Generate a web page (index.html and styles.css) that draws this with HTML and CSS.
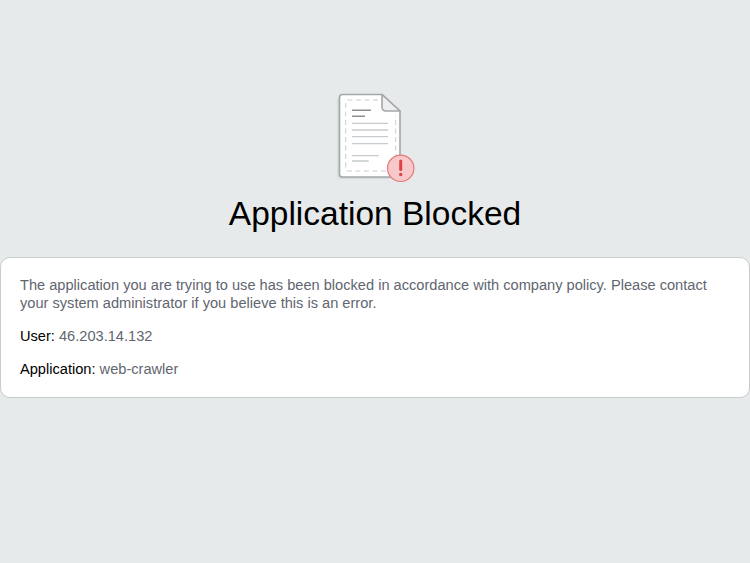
FILE: index.html
```html
<!DOCTYPE html>
<html lang="en">
<head>
<meta charset="utf-8">
<title>Application Blocked</title>
<link rel="stylesheet" href="styles.css">
</head>
<body>
<main class="page">
  <svg class="icon" width="80" height="94" viewBox="0 0 80 94" aria-hidden="true">
    <path d="M2 7 H46 L64 25 V88 H6 Q2 88 2 84 Z" fill="#d9dcde"/>
    <path d="M7.500 3.500 H47 L65 20 V83 Q65 86 62 86 H7.500 Q4.500 86 4.500 83 V6.500 Q4.500 3.500 7.500 3.500 Z" fill="#fff" stroke="#a4a7aa" stroke-width="1.600"/>
    <path d="M47 3.500 V16 Q47 20 51 20 H65 Z" fill="#eceeef" stroke="#a4a7aa" stroke-width="1.600" stroke-linejoin="round"/>
    <path d="M43 9 H13.700 Q10.700 9 10.700 12 V77 Q10.700 80 13.700 80 H58 Q60.700 80 60.700 77 V25" fill="none" stroke="#c9cccd" stroke-width="1" stroke-dasharray="5 3.500"/>
    <path d="M17 19.300 H36 M17 25.300 H30" stroke="#8d9093" stroke-width="1.500"/>
    <path d="M17 32.300 H53 M17 39 H53 M17 45.700 H53 M17 52.700 H53 M17 64.700 H44 M17 70 H33.700" stroke="#c8cbcd" stroke-width="1.300"/>
    <circle cx="65.700" cy="77.300" r="13.200" fill="#f8c9ca" stroke="#e7787b" stroke-width="1.200"/>
    <path d="M65.700 70 V78.500" stroke="#dd4248" stroke-width="3" stroke-linecap="round"/>
    <circle cx="65.700" cy="83.500" r="1.700" fill="#dd4248"/>
  </svg>
  <h1 class="title">Application Blocked</h1>
  <section class="card">
    <p class="message">The application you are trying to use has been blocked in accordance with company policy. Please contact your system administrator if you believe this is an error.</p>
    <p class="detail"><span class="label">User:</span> 46.203.14.132</p>
    <p class="detail"><span class="label">Application:</span> web-crawler</p>
  </section>
</main>
</body>
</html>
```

FILE: styles.css
```css
html, body {
  margin: 0;
  height: 100%;
}
body {
  background: #e7eaeb;
  font-family: "Liberation Sans", Arial, sans-serif;
  color: #5f6670;
}
.page {
  display: flex;
  flex-direction: column;
  align-items: center;
  padding-top: 91px;
}
.icon {
  display: block;
  filter: blur(0.3px);
}
.title {
  margin: 8px 0 22px;
  font-size: 33.500px;
  line-height: 42px;
  font-weight: 400;
  color: #000;
  text-align: center;
}
.card {
  box-sizing: border-box;
  width: 750px;
  height: 141px;
  padding: 18px 19px;
  background: #fff;
  border: 1px solid #c8ccce;
  border-radius: 10px;
  font-size: 14.620px;
  line-height: 18px;
}
.message {
  margin: 0 0 15px;
}
.detail {
  margin: 0 0 15px;
}
.label {
  color: #000;
}
```
